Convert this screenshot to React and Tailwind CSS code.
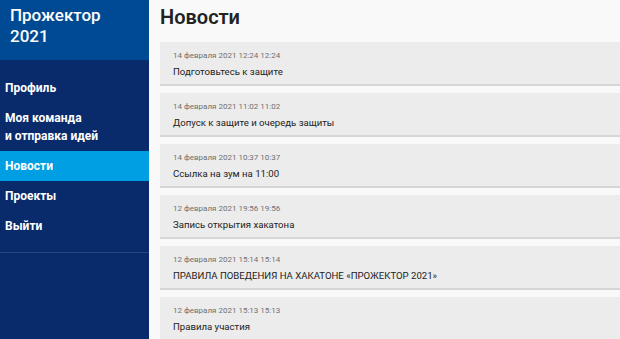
import { useState } from "react";

const news = [
  { date: "14 февраля 2021 12:24 12:24", title: "Подготовьтесь к защите" },
  { date: "14 февраля 2021 11:02 11:02", title: "Допуск к защите и очередь защиты" },
  { date: "14 февраля 2021 10:37 10:37", title: "Ссылка на зум на 11:00" },
  { date: "12 февраля 2021 19:56 19:56", title: "Запись открытия хакатона" },
  { date: "12 февраля 2021 15:14 15:14", title: "ПРАВИЛА ПОВЕДЕНИЯ НА ХАКАТОНЕ «ПРОЖЕКТОР 2021»" },
  { date: "12 февраля 2021 15:13 15:13", title: "Правила участия" },
];

const menu = [
  ["Профиль"],
  ["Моя команда", "и отправка идей"],
  ["Новости"],
  ["Проекты"],
  ["Выйти"],
];

function App() {
  const [active, setActive] = useState("Новости");

  return (
    <div
      className="flex h-[339px] w-[620px] overflow-hidden bg-[#f9f9f9]"
      style={{ fontFamily: "Roboto, 'Liberation Sans', sans-serif" }}
    >
      {/* sidebar */}
      <div className="w-[149px] shrink-0 bg-[#0a2b6b] text-white">
        <div className="h-[60px] bg-[#004a94] pl-[10px] pt-[5px] text-[17px] font-medium leading-[21px]">
          <p>Прожектор</p>
          <p>2021</p>
        </div>
        <div className="pt-[13px] pb-[11px]">
          {menu.map((lines) => (
            <div
              key={lines[0]}
              onClick={() => setActive(lines[0])}
              className={
                "cursor-pointer px-[5px] py-[6px] text-[12px] font-bold leading-[18px] " +
                (active === lines[0] ? "bg-[#009fe3]" : "")
              }
            >
              {lines.map((l) => (
                <p key={l}>{l}</p>
              ))}
            </div>
          ))}
        </div>
        <div className="h-px bg-[#23467f]"></div>
      </div>

      {/* content */}
      <div className="flex-1 pl-[11px] pt-[3px]">
        <h1 className="mb-[11px] text-[20px] font-semibold leading-[28px] text-[#222]">Новости</h1>
        <div className="flex flex-col gap-[7px]">
          {news.map((n, i) => (
            <div
              key={i}
              className="mr-[-10px] h-[44px] border-b-2 border-[#d6d6d6] bg-[#ececec] pl-[13px] pt-[9px]"
            >
              <p className="text-[8px] leading-[10px] text-[#707070]">{n.date}</p>
              <p className="mt-1 text-[9.6px] leading-[14px] text-[#222]">{n.title}</p>
            </div>
          ))}
        </div>
      </div>
    </div>
  );
}

export default App;
